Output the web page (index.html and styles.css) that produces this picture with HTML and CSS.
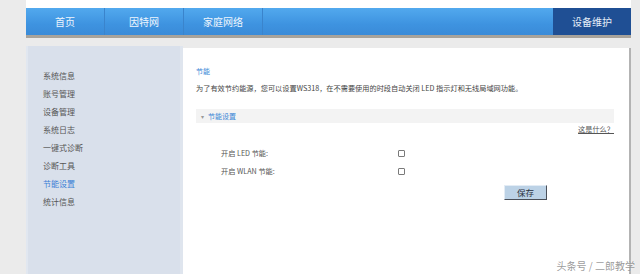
FILE: index.html
```html
<!DOCTYPE html>
<html lang="zh-CN">
<head>
  <meta charset="UTF-8">
  <meta name="viewport" content="width=device-width, initial-scale=1.0">
  <title>节能设置</title>
  <link rel="stylesheet" href="styles.css">
</head>
<body>
  <div class="page">
    <div class="top"></div>

    <!-- Top navigation -->
    <div class="nav">
      <a class="nav-item">首页</a>
      <a class="nav-item">因特网</a>
      <a class="nav-item">家庭网络</a>
      <a class="nav-item current">设备维护</a>
    </div>

    <div class="main">
      <ul class="side-menu">
        <li>系统信息</li>
        <li>账号管理</li>
        <li>设备管理</li>
        <li>系统日志</li>
        <li>一键式诊断</li>
        <li>诊断工具</li>
        <li class="active">节能设置</li>
        <li>统计信息</li>
      </ul>

      <div class="content">
        <div class="title">节能</div>
        <p class="desc">为了有效节约能源，您可以设置WS318，在不需要使用的时段自动关闭 LED 指示灯和无线局域网功能。</p>

        <div class="section-bar"><span class="arrow">▾</span>节能设置</div>
        <div class="help"><a>这是什么？</a></div>

        <div class="form-rows">
          <div class="form-row">
            <span class="label">开启 LED 节能:</span>
            <span class="check"></span>
          </div>
          <div class="form-row">
            <span class="label">开启 WLAN 节能:</span>
            <span class="check"></span>
          </div>
        </div>
        <div class="actions">
          <button class="save-btn">保存</button>
        </div>
      </div>
    </div>
  </div>

  <div class="watermark">头条号 / 二郎教学</div>
</body>
</html>
```

FILE: styles.css
```css
/* Base */
body {
  margin: 0;
  background-color: #ebebeb;
  font-family: "Noto Sans CJK SC", "Noto Sans", sans-serif;
  height: 274px;
  overflow: hidden;
  position: relative;
}

.page {
  width: 605px;
  margin-left: 26px;
}

/* White strip above the nav */
.top {
  height: 8px;
  background-color: #fff;
}

/* Navigation */
.nav {
  display: flex;
  height: 27px;
  background: linear-gradient(#52a9ee, #3e93e0 60%, #3a8bd8);
  box-shadow: 0 3px 0 #a8a39b;
}

.nav-item {
  width: 78px;
  line-height: 27px;
  text-align: center;
  font-size: 10px;
  color: #eef6fd;
  border-right: 1px solid #3a84cc;
}

.nav-item.current {
  margin-left: auto;
  border-right: none;
  background: #1f4f94;
  color: #e6eef8;
}

/* Main area */
.main {
  display: flex;
  margin-top: 11px;
  height: 228px;
}

.side-menu {
  width: 157px;
  margin: 0;
  padding: 21px 0 0 15px;
  box-sizing: border-box;
  list-style: none;
  background-color: #d9e0eb;
  border-left: 2px solid #e1e7f0;
  border-right: 3px solid #dfe5ee;
}

.side-menu li {
  font-size: 8px;
  line-height: 18px;
  color: #555;
}

.side-menu li.active {
  color: #3a7fd6;
}

.content {
  flex: 1;
  margin-top: 2px;
  padding: 17px 15px 0 13px;
  background-color: #fff;
  border-right: 2px solid #b3b3b3;
}

.title {
  font-size: 7px;
  line-height: 12px;
  color: #3a86d6;
}

.desc {
  margin: 5px 0 0;
  font-size: 7.2px;
  line-height: 12px;
  color: #444;
}

.section-bar {
  margin-top: 15px;
  height: 14px;
  line-height: 14px;
  padding-left: 5px;
  background-color: #f3f3f3;
  font-size: 7px;
  color: #3a86d6;
}

.arrow {
  display: inline-block;
  margin-right: 4px;
  font-size: 6px;
  color: #999;
}

.help {
  text-align: right;
  line-height: 12px;
  font-size: 7.2px;
}

.help a {
  color: #555;
  text-decoration: underline;
}

.form-rows {
  margin-top: 9px;
}

.form-row {
  display: flex;
  align-items: center;
  height: 18px;
  padding-left: 25px;
  font-size: 7.2px;
  color: #555;
}

.label {
  width: 177px;
}

.check {
  width: 5px;
  height: 5px;
  border: 1px solid #7a7a7a;
  border-radius: 1px;
}

.actions {
  display: flex;
  padding: 5px 0 0 308px;
}

.save-btn {
  width: 43px;
  height: 15px;
  padding: 0;
  font-family: "Noto Sans CJK SC", sans-serif;
  font-size: 8.5px;
  line-height: 11px;
  color: #2a3140;
  background-color: #bcd2e6;
  border: 1px solid;
  border-color: #e3ecf5 #4a4f58 #4a4f58 #e3ecf5;
}

/* Watermark over the page */
.watermark {
  position: absolute;
  right: 5px;
  bottom: 1px;
  font-size: 10px;
  color: rgba(120, 120, 120, 0.75);
  text-shadow: 0 0 2px #fff;
}
```
